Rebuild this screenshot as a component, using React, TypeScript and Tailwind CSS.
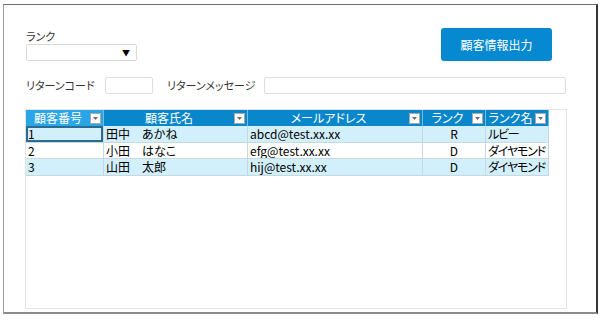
const font = {
  fontFamily: '"Noto Sans CJK JP", "Noto Sans", sans-serif',
  fontFeatureSettings: '"palt"',
};

type Row = { no: string; name: string; mail: string; rank: string; rankName: string };

const rows: Row[] = [
  { no: "1", name: "田中\u3000あかね", mail: "abcd@test.xx.xx", rank: "R", rankName: "ルビー" },
  { no: "2", name: "小田\u3000はなこ", mail: "efg@test.xx.xx", rank: "D", rankName: "ダイヤモンド" },
  { no: "3", name: "山田\u3000太郎", mail: "hij@test.xx.xx", rank: "D", rankName: "ダイヤモンド" },
];

const cols = [
  { label: "顧客番号", active: true },
  { label: "顧客氏名" },
  { label: "メールアドレス" },
  { label: "ランク" },
  { label: "ランク名" },
];

function FilterButton() {
  return (
    <span className="mr-[2px] flex h-[11px] w-[11px] shrink-0 items-center justify-center border border-[#a9a9a9] bg-white">
      <svg width="5" height="3" viewBox="0 0 5 3">
        <path d="M0 0h5L2.5 3z" fill="#6b6b6b" />
      </svg>
    </span>
  );
}

export default function App() {
  return (
    <div className="h-[320px] w-[600px] overflow-hidden bg-white pl-[3px] pt-[4px]" style={font}>
      <div className="h-[310px] w-[595px] border-t border-l border-r-2 border-b-2 border-t-[#6e6e6e] border-l-[#9c9c9c] border-r-[#353535] border-b-[#8c8c8c]">
        {/* top */}
        <div className="flex items-start justify-between pl-[22px] pr-[44px] pt-[23px]">
          <div className="flex flex-col">
            <span className="h-[16px] whitespace-nowrap text-[11px] leading-[16px] text-[#333]">ランク</span>
            <div className="flex h-[17px] w-[111px] items-center justify-end rounded-[2px] border border-[#d9d9d9] bg-white pr-[6px]">
              <span className="text-[8px] leading-none text-black">▼</span>
            </div>
          </div>
          <button className="h-[33px] w-[111px] rounded-[3px] bg-[#0789d2] text-[12px] text-white">
            顧客情報出力
          </button>
        </div>

        {/* return row */}
        <div className="mt-[16px] flex items-center pl-[22px]">
          <span className="w-[79px] whitespace-nowrap text-[11px] text-[#333]">リターンコード</span>
          <div className="h-[17px] w-[48px] rounded-[2px] border border-[#dedede]" />
          <span className="ml-[14px] w-[97px] whitespace-nowrap text-[11px] text-[#333]">リターンメッセージ</span>
          <div className="h-[17px] w-[302px] rounded-[2px] border border-[#dedede]" />
        </div>

        {/* grid */}
        <div className="ml-[21px] mt-[15px] h-[200px] w-[542px] border border-[#e4e4e4]">
          <div className="grid w-[523px] grid-cols-[78px_144px_175px_63px_63px]">
            {cols.map((c) => (
              <div
                key={c.label}
                className={
                  "flex h-[16px] items-center border-r border-[#6fbde8] " +
                  (c.active ? "bg-[#2aa5e5]" : "bg-[#0a87cb]")
                }
              >
                <span className="flex-1 whitespace-nowrap text-center text-[12px] leading-none text-white">{c.label}</span>
                <FilterButton />
              </div>
            ))}
            {rows.map((r, i) => {
              const bg = i % 2 === 0 ? "bg-[#d2effc] h-[17px]" : "bg-white h-[16px]";
              const cell =
                "flex items-center overflow-hidden whitespace-nowrap border-b border-r border-[#c6d9e2] px-[2px] text-[12px] leading-none text-black " +
                bg;
              return [
                <div key={r.no + "a"} className={cell + (i === 0 ? " shadow-[inset_0_0_0_2px_#2a6c90]" : "")}>{r.no}</div>,
                <div key={r.no + "b"} className={cell}>{r.name}</div>,
                <div key={r.no + "c"} className={cell}>{r.mail}</div>,
                <div key={r.no + "d"} className={cell + " justify-center"}>{r.rank}</div>,
                <div key={r.no + "e"} className={cell + " tracking-[-1.2px]"}>{r.rankName}</div>,
              ];
            })}
          </div>
        </div>
      </div>
    </div>
  );
}
